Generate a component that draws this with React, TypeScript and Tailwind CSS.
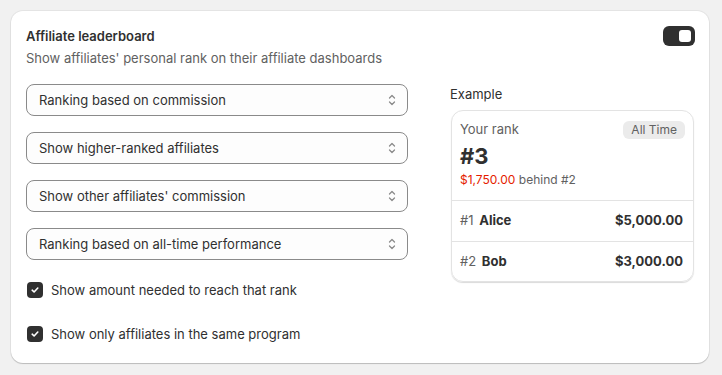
import React from "react";

function Chevrons() {
  return (
    <svg width="20" height="20" viewBox="0 0 20 20" fill="none" className="shrink-0">
      <path d="M7.5 8L10 5.5L12.5 8" stroke="#8a8a8a" strokeWidth="1.3" strokeLinecap="round" strokeLinejoin="round" />
      <path d="M7.5 12L10 14.5L12.5 12" stroke="#8a8a8a" strokeWidth="1.3" strokeLinecap="round" strokeLinejoin="round" />
    </svg>
  );
}

function Select({ label }: { label: string }) {
  return (
    <div className="flex h-8 items-center justify-between rounded-lg border border-[#8a8a8a] bg-[#fdfdfd] pl-3 pr-[5px] text-[13px] text-[#303030]">
      <span className="pt-[1px]">{label}</span>
      <Chevrons />
    </div>
  );
}

function Check({ label }: { label: string }) {
  return (
    <div className="flex h-7 items-center gap-2 text-[13px] text-[#303030]">
      <div className="ml-[1px] flex h-4 w-4 items-center justify-center rounded-[4px] bg-[#303030]">
        <svg width="12" height="12" viewBox="0 0 12 12" fill="none">
          <path d="M3.2 6.2L5.1 8L8.8 4" stroke="white" strokeWidth="1.6" strokeLinecap="round" strokeLinejoin="round" />
        </svg>
      </div>
      <span className="pt-[1px]">{label}</span>
    </div>
  );
}

export default function App() {
  return (
    <div
      className="min-h-[375px] w-[722px] bg-[#f1f1f1] pl-[11px] pr-[13px] pt-[11px]"
      style={{ fontFamily: "Inter, 'Noto Sans', sans-serif" }}
    >
      <div className="h-[352px] rounded-xl bg-white px-[15px] pt-[15px] shadow-[0_0_0_1px_rgba(0,0,0,0.05),0_1px_1px_rgba(0,0,0,0.18)]">
        <div className="flex items-start justify-between">
          <div>
            <div className="text-[13px] font-semibold leading-5 text-[#303030]">Affiliate leaderboard</div>
            <div className="mt-[2px] text-[13px] leading-5 text-[#616161]">
              Show affiliates' personal rank on their affiliate dashboards
            </div>
          </div>
          <div className="mr-[-1px] flex h-5 w-8 items-center justify-end rounded-[6px] bg-[#303030] pr-[4px]">
            <div className="h-3 w-3 rounded-[3px] bg-white" />
          </div>
        </div>
        <div className="mt-4 flex gap-[42px]">
          <div className="flex w-[382px] flex-col gap-4">
            <Select label="Ranking based on commission" />
            <Select label="Show higher-ranked affiliates" />
            <Select label="Show other affiliates' commission" />
            <Select label="Ranking based on all-time performance" />
            <Check label="Show amount needed to reach that rank" />
            <Check label="Show only affiliates in the same program" />
          </div>
          <div className="flex-1">
            <div className="text-[13px] leading-5 text-[#303030]">Example</div>
            <div className="ml-[1px] mt-[6px] overflow-hidden rounded-xl border border-[#e3e3e3] shadow-[0_1px_1px_rgba(0,0,0,0.15)]">
              <div className="px-2 pb-[10px] pt-[9px]">
                <div className="flex h-5 items-center justify-between">
                  <span className="text-[13px] text-[#616161]">Your rank</span>
                  <span className="rounded-md bg-[#ebebeb] px-2 text-[12px] leading-[18px] text-[#616161]">All Time</span>
                </div>
                <div className="mt-1 text-[22px] font-bold leading-6 text-[#303030]">#3</div>
                <div className="mt-[2px] text-[12px] leading-5 text-[#616161]">
                  <span className="text-[#e51c00]">$1,750.00</span> behind #2
                </div>
              </div>
              <div className="flex h-[41px] items-center justify-between border-t border-[#e3e3e3] pl-2 pr-[10px] text-[13px] text-[#303030]">
                <span>
                  <span className="text-[#616161]">#1</span> <span className="ml-[2px] font-bold">Alice</span>
                </span>
                <span className="font-bold">$5,000.00</span>
              </div>
              <div className="flex h-10 items-center justify-between border-t border-[#e3e3e3] pl-2 pr-[10px] text-[13px] text-[#303030]">
                <span>
                  <span className="text-[#616161]">#2</span> <span className="ml-[2px] font-bold">Bob</span>
                </span>
                <span className="font-bold">$3,000.00</span>
              </div>
            </div>
          </div>
        </div>
      </div>
    </div>
  );
}
